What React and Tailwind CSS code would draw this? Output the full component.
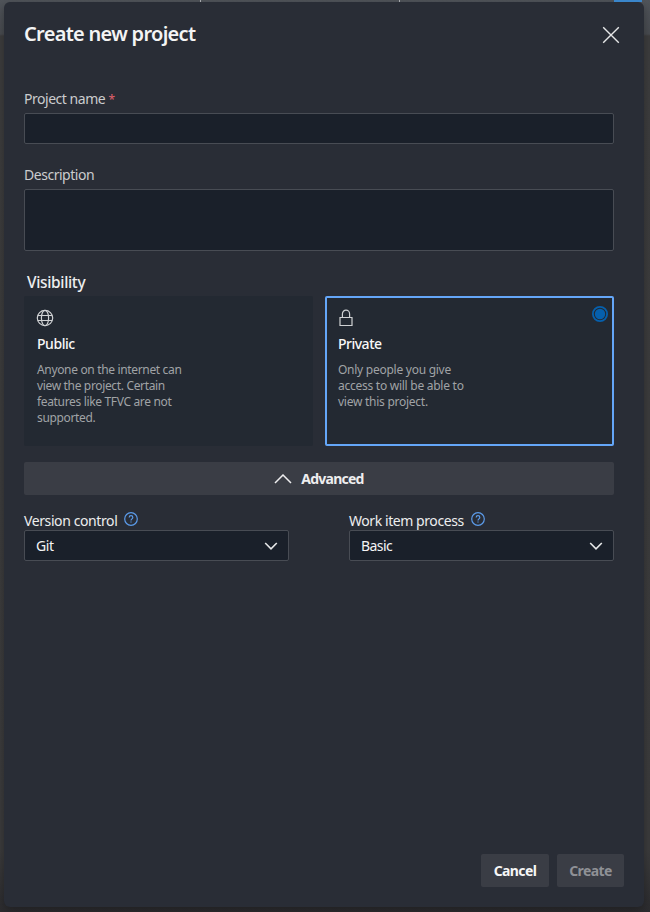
function CloseIcon() {
  return (
    <svg width="18" height="18" viewBox="0 0 18 18" fill="none" stroke="#e6e7e8" strokeWidth="1.4">
      <path d="M1.2 1.2 16.8 16.8M16.8 1.2 1.2 16.8" />
    </svg>
  );
}

function GlobeIcon() {
  return (
    <svg className="block" width="18" height="18" viewBox="0 0 18 18" fill="none" stroke="#cfd1d3" strokeWidth="1.2">
      <circle cx="9" cy="9" r="7.7" />
      <ellipse cx="9" cy="9" rx="3.6" ry="7.7" />
      <path d="M2 6.5h14M2 11.5h14" />
    </svg>
  );
}

function LockIcon() {
  return (
    <svg className="block" width="18" height="18" viewBox="0 0 18 18" fill="none" stroke="#cfd1d3" strokeWidth="1.2">
      <path d="M2 8.5h12v8H2zM4.4 8.5V5a3.6 3.9 0 0 1 7.2 0v3.5" />
    </svg>
  );
}

function HelpIcon() {
  return (
    <svg className="block" width="14" height="14" viewBox="0 0 14 14" fill="none" stroke="#5b9bea" strokeWidth="1.2">
      <circle cx="7" cy="7" r="6.3" />
      <path d="M5.2 5.5C5.2 4.3 6 3.7 7 3.7s1.8.7 1.8 1.7c0 1.4-1.8 1.5-1.8 3.1M7 9.4v1.2" />
    </svg>
  );
}

function ChevronDown() {
  return (
    <svg width="14" height="8" viewBox="0 0 14 8" fill="none" stroke="#e6e7e8" strokeWidth="1.6">
      <path d="m1.2 1 5.8 5.8L12.8 1" />
    </svg>
  );
}

function SelectField({ label, labelClass, value, valueClass }) {
  return (
    <div className="w-[265px]">
      <div className="flex h-[18px] items-start gap-[7px] text-[14px] leading-[18px] text-[#edeeef]">
        <span className={labelClass}>{label}</span>
        <HelpIcon />
      </div>
      <div className="flex h-[31px] items-center justify-between rounded-[2px] border border-[#484c54] bg-[#1a202a] pl-[11px] pr-[10px] text-[14px] text-[#f4f4f5]">
        <span className={valueClass}>{value}</span>
        <ChevronDown />
      </div>
    </div>
  );
}

export default function App() {
  return (
    <div className="h-[912px] w-[650px] overflow-hidden bg-[linear-gradient(to_bottom,#50545a_0px,#484b50_34px,#3d3d3e_36px,#3b3b3c_850px,#2c2c2f_912px)] font-['Noto_Sans','Open_Sans',sans-serif]">
      <div className="flex h-[2px]">
        <div className="w-[200px]" />
        <div className="w-px bg-[#a5a8ac]" />
        <div className="w-[198px]" />
        <div className="w-px bg-[#a5a8ac]" />
        <div className="w-[214px]" />
        <div className="w-[28px] bg-[#3a86cb]" />
      </div>
      <div className="ml-1 flex h-[905px] w-[640px] flex-col rounded-[6px] bg-[#292d36] pl-5 pr-[30px] shadow-[0_3px_10px_rgba(0,0,0,0.3)]">
        <div className="flex h-[87px] items-start justify-between">
          <h1 className="mt-[18px] text-[20px] font-semibold leading-[28px] tracking-[-0.7px] text-[#f4f4f4]">Create new project</h1>
          <div className="mr-[-6px] mt-6"><CloseIcon /></div>
        </div>
        <label className="h-6 text-[14px] leading-[20px] tracking-[-0.47px] text-[#cbccce]">
          Project name <span className="text-[12px] text-[#e0616c]">*</span>
        </label>
        <div className="h-[31px] shrink-0 rounded-[2px] border border-[#484c54] bg-[#1a202a]" />
        <label className="mt-[21px] h-6 text-[14px] leading-[20px] tracking-[-0.47px] text-[#cbccce]">Description</label>
        <div className="h-[62px] shrink-0 rounded-[2px] border border-[#484c54] bg-[#1a202a]" />
        <h2 className="mt-[21px] h-6 pl-[3px] text-[15.5px] font-medium leading-[20px] tracking-[-0.35px] text-[#edeeef]">Visibility</h2>
        <div className="flex h-[150px] shrink-0 gap-3">
          <div className="w-[289px] rounded-[2px] bg-[#232932] px-3 pt-[13px]">
            <GlobeIcon />
            <div className="mt-[7px] text-[14px] font-medium leading-[20px] tracking-[-0.45px] text-[#f8f8f8]"><span className="ml-px">Public</span></div>
            <p className="ml-px mt-[8px] text-[12px] leading-[16px] tracking-[-0.34px] text-[#a0a3a6]">
              Anyone on the internet can<br />view the project. Certain<br />features like TFVC are not<br />supported.
            </p>
          </div>
          <div className="flex w-[289px] justify-between rounded-[2px] border-2 border-[#64a6f8] bg-[#232932] pl-[11px] pr-1 pt-[11px]">
            <div>
              <LockIcon />
              <div className="mt-[7px] text-[14px] font-medium leading-[20px] tracking-[-0.5px] text-[#f8f8f8]">Private</div>
              <p className="mt-[8px] text-[12px] leading-[16px] tracking-[-0.26px] text-[#a0a3a6]">
                Only people you give<br />access to will be able to<br />view this project.
              </p>
            </div>
            <svg className="-mt-[3px]" width="16" height="16" viewBox="0 0 16 16">
              <circle cx="8" cy="8" r="7.1" fill="none" stroke="#0660ad" strokeWidth="1.8" />
              <circle cx="8" cy="8" r="5.2" fill="#0660ad" />
            </svg>
          </div>
        </div>
        <div className="mt-4 flex h-[33px] shrink-0 items-center justify-center gap-[9px] rounded-[2px] bg-[#3a3d45] text-[14px] font-bold text-[#eeeeef]">
          <svg width="18" height="10" viewBox="0 0 18 10" fill="none" stroke="#eeeeef" strokeWidth="1.5">
            <path d="m1 9 8-8 8 8" />
          </svg>
          <span className="tracking-[-0.75px]">Advanced</span>
        </div>
        <div className="mt-[17px] flex justify-between">
          <SelectField label="Version control" labelClass="tracking-[-0.4px]" value="Git" valueClass="tracking-[-0.4px]" />
          <SelectField label="Work item process" labelClass="tracking-[-0.43px]" value="Basic" valueClass="tracking-[-0.55px]" />
        </div>
        <div className="mb-5 mr-[-10px] mt-auto flex justify-end gap-2 text-[14px] font-bold tracking-[-0.6px]">
          <button className="h-[33px] w-[68px] rounded-[2px] bg-[#3a3d45] text-[#f6f6f6]">Cancel</button>
          <button className="h-[33px] w-[67px] rounded-[2px] bg-[#3a3d45] text-[#8f9196]">Create</button>
        </div>
      </div>
    </div>
  );
}
